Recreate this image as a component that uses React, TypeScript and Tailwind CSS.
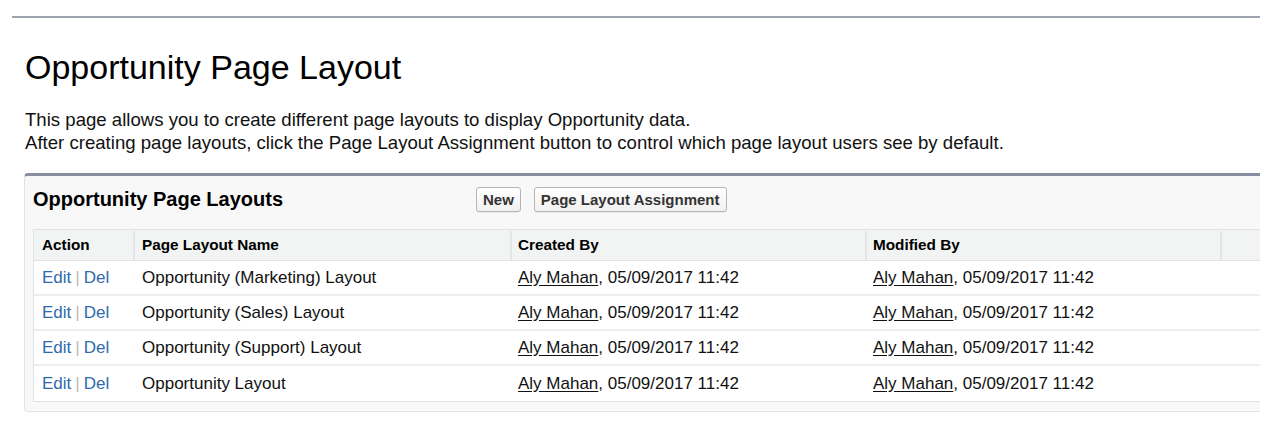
import React from "react";

const rows = [
  "Opportunity (Marketing) Layout",
  "Opportunity (Sales) Layout",
  "Opportunity (Support) Layout",
  "Opportunity Layout",
];

function Btn({ children }: { children: React.ReactNode }) {
  return (
    <button className="h-[25px] px-[6px] rounded-[3px] border border-[#b5b5b5] bg-gradient-to-b from-white to-[#f0f0f0] text-[15px] font-bold text-[#333] leading-none shadow-[0_1px_0_rgba(0,0,0,0.05)]">
      {children}
    </button>
  );
}

export default function App() {
  return (
    <div className="w-[1280px] h-[440px] bg-white overflow-hidden text-black" style={{ fontFamily: '"Liberation Sans", Arial, sans-serif' }}>
      <div className="pt-[16px] pl-[12px] pr-[20px]">
        <div className="h-[2px] bg-[#9ea3b1]" />
      </div>
      <h1 className="ml-[25px] mt-[30px] text-[34px] leading-[38px] font-normal text-black">Opportunity Page Layout</h1>
      <div className="ml-[25px] mt-[22px] text-[18.6px] leading-[23px] text-[#111]">
        <p>This page allows you to create different page layouts to display Opportunity data.</p>
        <p>After creating page layouts, click the Page Layout Assignment button to control which page layout users see by default.</p>
      </div>
      <div className="ml-[24px] mr-[20px] mt-[19px] bg-[#f8f8f8] border border-[#e3e3e3] border-t-[3px] border-t-[#878ea0] border-r-0 rounded-tl-[4px] rounded-bl-[4px] pb-[9px]">
        <div className="flex items-center h-[53px] pb-[7px] pl-[8px]">
          <div className="w-[443px] text-[20px] font-bold text-black">Opportunity Page Layouts</div>
          <div className="flex gap-[13px]">
            <Btn>New</Btn>
            <Btn>Page Layout Assignment</Btn>
          </div>
        </div>
        <div className="ml-[8px] border border-[#e0e3e5] border-r-0 bg-white">
          <div className="flex h-[31px] pt-[1px] bg-[#f2f3f3] text-[15.3px] font-bold text-black items-stretch border-b border-[#e0e3e5]">
            <div className="w-[101px] pl-[8px] flex items-center border-r-2 border-[#e3e5e6]">Action</div>
            <div className="w-[377px] pl-[7px] flex items-center border-r-2 border-[#e3e5e6]">Page Layout Name</div>
            <div className="w-[355px] pl-[6px] flex items-center border-r-2 border-[#e3e5e6]">Created By</div>
            <div className="w-[355px] pl-[6px] flex items-center border-r-2 border-[#e3e5e6]">Modified By</div>
            <div className="flex-1" />
          </div>
          {rows.map((name, i) => (
            <div key={name} className={`flex h-[35px] items-center text-[17px] text-[#111] ${i < rows.length - 1 ? "border-b-2 border-[#eeeeee]" : ""}`}>
              <div className="w-[101px] pl-[8px] pt-[1px]">
                <span className="text-[#2f6aad]">Edit</span>
                <span className="text-[#bbbbbb] mx-[4px]">|</span>
                <span className="text-[#2f6aad]">Del</span>
              </div>
              <div className="w-[377px] pl-[7px]">{name}</div>
              <div className="w-[355px] pl-[6px]">
                <span className="underline underline-offset-2">Aly Mahan</span>, 05/09/2017 11:42
              </div>
              <div className="w-[355px] pl-[6px]">
                <span className="underline underline-offset-2">Aly Mahan</span>, 05/09/2017 11:42
              </div>
              <div className="flex-1" />
            </div>
          ))}
        </div>
      </div>
    </div>
  );
}
